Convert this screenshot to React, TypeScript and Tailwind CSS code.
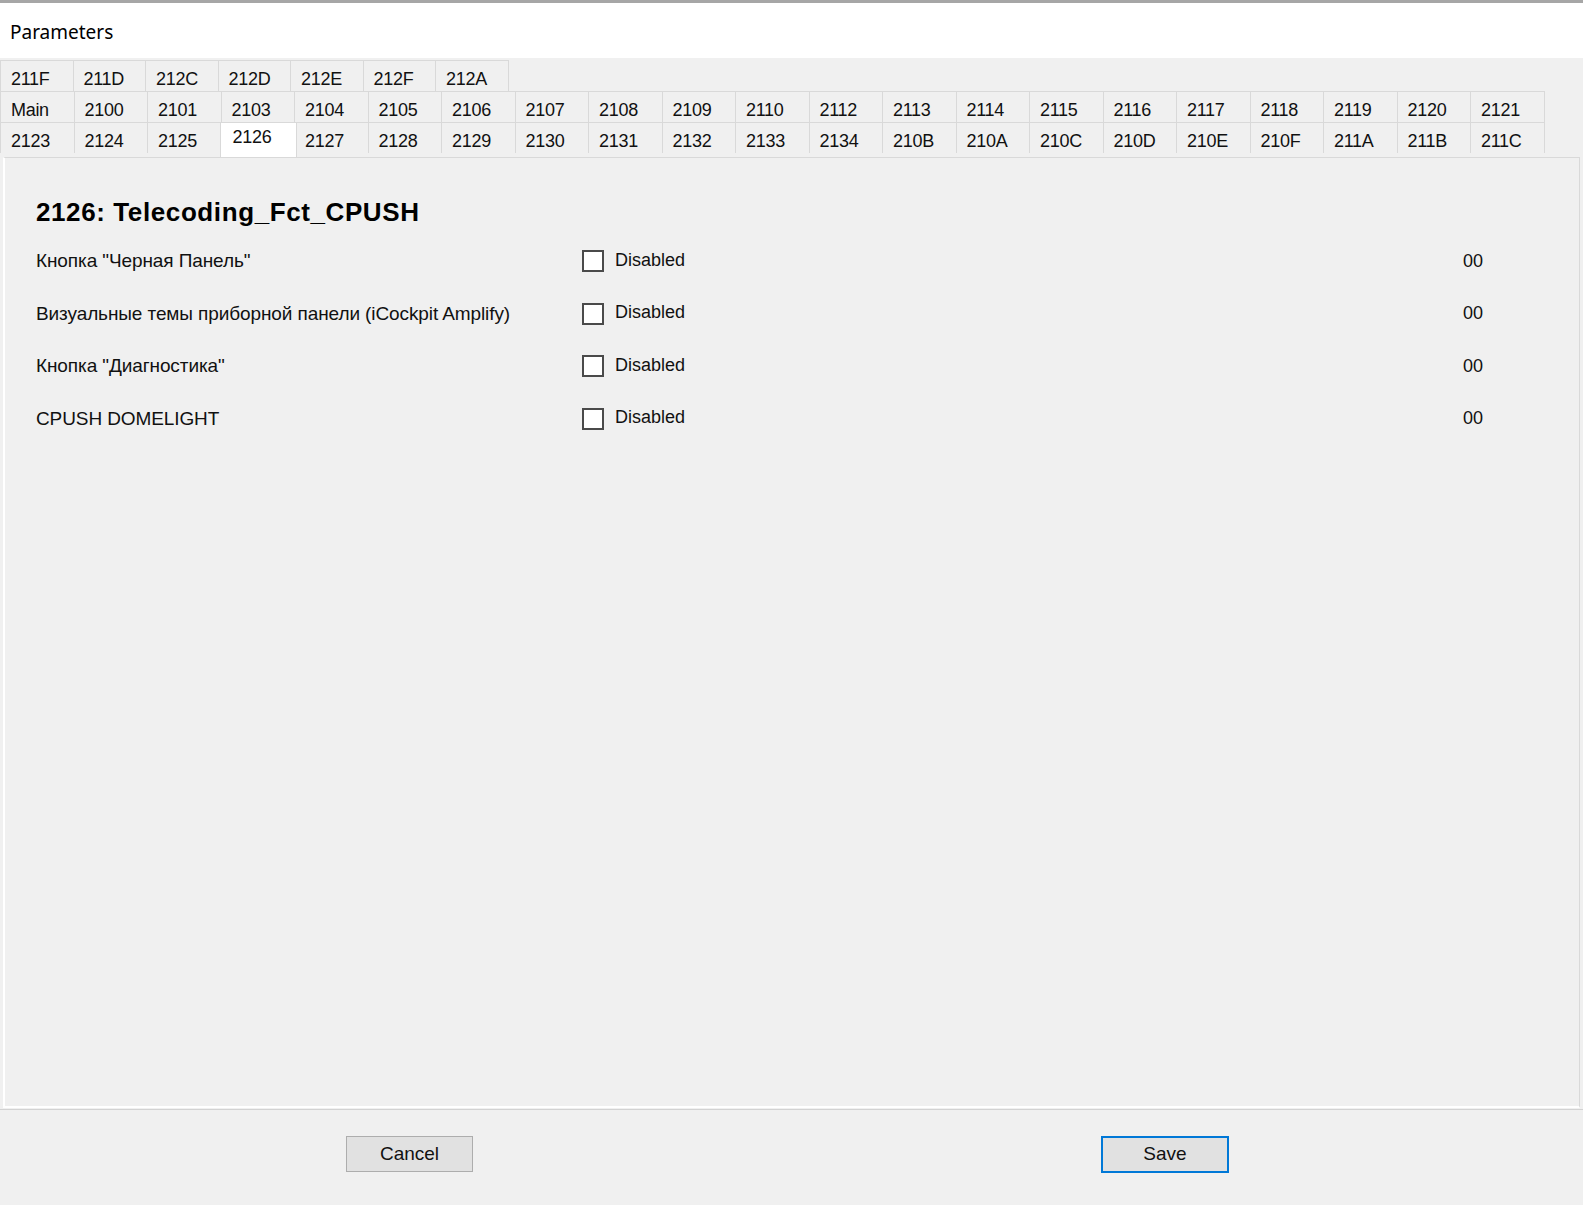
import React from "react";

const row1 = ["211F", "211D", "212C", "212D", "212E", "212F", "212A"];
const row2 = [
  "Main", "2100", "2101", "2103", "2104", "2105", "2106", "2107", "2108", "2109", "2110",
  "2112", "2113", "2114", "2115", "2116", "2117", "2118", "2119", "2120", "2121",
];
const row3 = [
  "2123", "2124", "2125", "2126", "2127", "2128", "2129", "2130", "2131", "2132", "2133",
  "2134", "210B", "210A", "210C", "210D", "210E", "210F", "211A", "211B", "211C",
];
const selected = "2126";

const params = [
  "Кнопка \"Черная Панель\"",
  "Визуальные темы приборной панели (iCockpit Amplify)",
  "Кнопка \"Диагностика\"",
  "CPUSH DOMELIGHT",
];

function Tab({ label, narrow }: { label: string; narrow?: boolean }) {
  return (
    <div
      className={`${narrow ? "w-[72.5px]" : "w-[73.5px]"} h-[31px] shrink-0 border-t border-r border-[#d9d9d9] bg-[#f0f0f0] pl-[10px] pt-[7px] leading-[22px]`}
    >
      {label}
    </div>
  );
}

function TabRow({ labels, last }: { labels: string[]; last?: boolean }) {
  return (
    <div className={`flex items-start ${last ? "h-[35px]" : "h-[31px]"}`}>
      {labels.map((l, i) =>
        l === selected ? (
          <div
            key={l}
            className="relative z-10 -mx-[2px] h-[35px] w-[77.5px] shrink-0 border-t border-x border-[#d9d9d9] bg-white pl-[12px] pt-[3px] leading-[22px]"
          >
            {l}
          </div>
        ) : (
          <div key={l} className={i === 0 ? "border-l border-[#d9d9d9]" : ""}>
            <Tab label={l} />
          </div>
        )
      )}
    </div>
  );
}

function ParamRow({ label }: { label: string }) {
  return (
    <div className="flex h-[52.5px] items-center">
      <div className="w-[546px] shrink-0 text-[19px] tracking-[-0.1px]">{label}</div>
      <div className="h-[22px] w-[22px] shrink-0 border-2 border-[#4a4a4a] bg-white" />
      <div className="ml-[11px] w-[848px] shrink-0 -translate-y-[1px] text-[18px]">Disabled</div>
      <div className="text-[18px]">00</div>
    </div>
  );
}

export default function App() {
  return (
    <div
      className="flex h-[1205px] w-[1583px] flex-col overflow-hidden bg-[#f0f0f0] text-[#111]"
      style={{ fontFamily: '"Liberation Sans", Arial, sans-serif' }}
    >
      {/* window frame edge */}
      <div className="h-[3px] bg-[#a6a6a6]" />

      {/* caption */}
      <div className="flex h-[55px] items-center bg-white pl-[10px] pt-[3px]">
        <span className="text-[19px] text-black" style={{ fontFamily: '"Noto Sans", sans-serif' }}>
          Parameters
        </span>
      </div>

      {/* multi-row tab strip */}
      <div className="mt-[2px] flex flex-col text-[18px] tracking-[-0.3px]">
        <div className="flex h-[31px]">
          {row1.map((l, i) => (
            <div key={l} className={i === 0 ? "border-l border-[#d9d9d9]" : ""}>
              <Tab label={l} narrow />
            </div>
          ))}
        </div>
        <TabRow labels={row2} />
        <TabRow labels={row3} last />
      </div>

      {/* tab page */}
      <div className="ml-[3px] h-[951px] w-[1577px] shrink-0 border-t border-r border-l-2 border-b-2 border-[#d9d9d9] border-l-white border-b-white">
        <div className="pl-[31px] pt-[39px]">
          <div className="text-[26px] font-bold leading-[30px] tracking-[0.6px] text-black">
            2126: Telecoding_Fct_CPUSH
          </div>
          <div className="mt-[8px] flex flex-col">
            {params.map((p) => (
              <ParamRow key={p} label={p} />
            ))}
          </div>
        </div>
      </div>

      {/* separator */}
      <div className="mt-[1px] h-px bg-[#d2d2d2]" />

      {/* dialog buttons */}
      <div className="flex items-start pt-[26px] text-[19px]">
        <button className="ml-[346px] h-[36px] w-[127px] border border-[#adadad] bg-[#e1e1e1] text-[#111]">
          Cancel
        </button>
        <button className="ml-[628px] h-[37px] w-[128px] border-2 border-[#0078d7] bg-[#e1e1e1] text-[#111]">
          Save
        </button>
      </div>
    </div>
  );
}
